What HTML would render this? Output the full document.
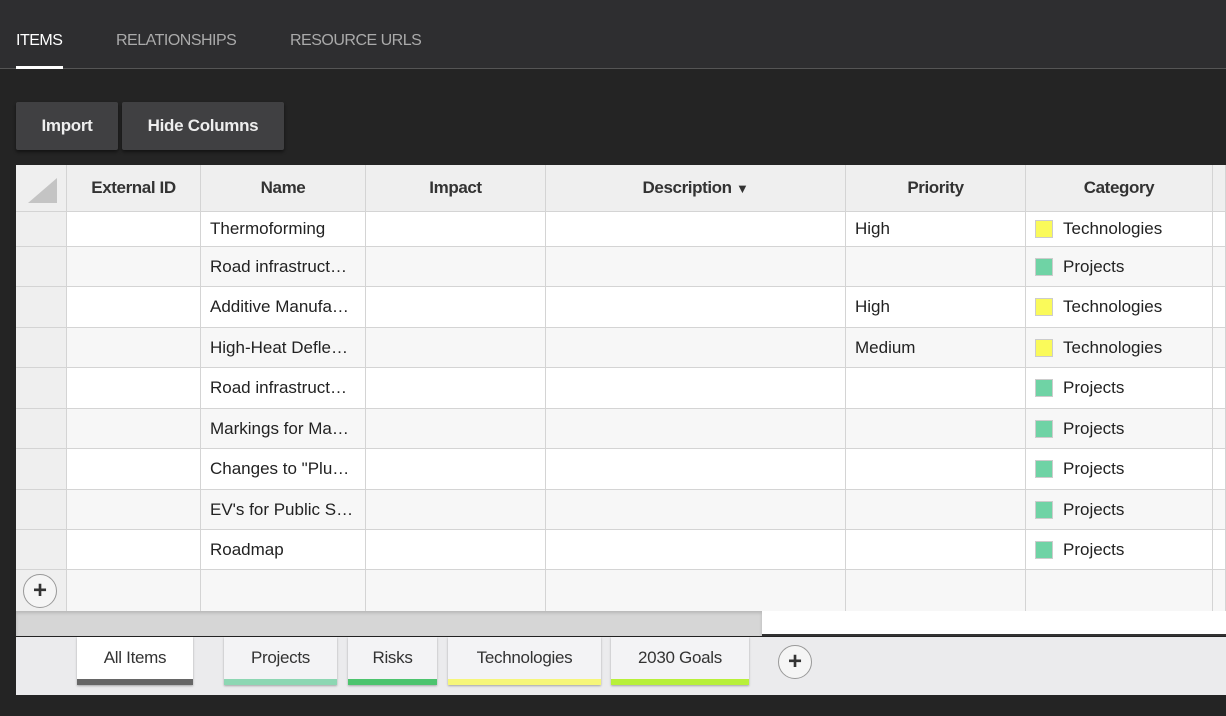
<!DOCTYPE html><html><head><style>
*{margin:0;padding:0;box-sizing:border-box}
body{width:1226px;height:716px;background:#242424;font-family:"Liberation Sans",sans-serif;position:relative;overflow:hidden}
.top{position:absolute;left:0;top:0;width:1226px;height:69px;background:#2e2e30;border-bottom:1px solid #555}
.tab{position:absolute;top:32px;font-size:16px;color:#aaa;letter-spacing:-0.5px}
.btn{position:absolute;top:102px;height:48px;background:#404042;color:#eee;font-weight:bold;font-size:17px;border-radius:2px;display:flex;align-items:center;justify-content:center;letter-spacing:-0.3px;box-shadow:0 2px 3px rgba(0,0,0,.5)}
.grid{position:absolute;left:16px;top:165px;width:1210px}
.r{display:grid;grid-template-columns:51px 134px 165px 180px 300px 180px 187px 13px;border-bottom:1px solid #d4d4d4}
.r>div{border-right:1px solid #d4d4d4;font-size:17px;color:#222;padding:0 0 0 9px;white-space:nowrap;overflow:hidden;display:flex;align-items:center}
.r>div:first-child{background:#efefef}
.h{height:47px;background:#efefef}
.h>div{justify-content:center;padding:0!important;font-size:17px;color:#333;font-weight:bold;letter-spacing:-0.4px}
.w{background:#fff}.g{background:#f7f7f7}
.sw{display:inline-block;width:18px;height:18px;margin-right:10px;border:1px solid #ccc;flex:none}
.y{background:#fafa5a}.gr{background:#6fd3a5}
.sb{position:absolute;left:16px;top:611px;width:1210px;height:25px;background:#fff;border-bottom:2px solid #333}
.sb div{width:746px;height:25px;background:#d6d6d6;box-shadow:inset 0 2px 3px rgba(0,0,0,.15)}
.bar{position:absolute;left:16px;top:637px;width:1210px;height:58px;background:#ebebed}
.st{position:absolute;top:0;height:48px;background:#f3f3f5;font-size:17px;color:#333;text-align:center;padding-top:11px;box-shadow:0 1px 2px rgba(0,0,0,.3);letter-spacing:-0.3px}
.st i{position:absolute;left:0;right:0;bottom:0;height:6px}
.plus{position:absolute;width:34px;height:34px;border-radius:50%;border:1px solid #999;background:#f5f5f5;font-size:24px;font-weight:bold;line-height:31px;text-align:center;color:#333}
</style></head><body>
<div class="top">
<div class="tab" style="left:16px;color:#fff">ITEMS</div>
<div style="position:absolute;left:16px;top:66px;width:47px;height:3px;background:#fff"></div>
<div class="tab" style="left:116px">RELATIONSHIPS</div>
<div class="tab" style="left:290px">RESOURCE URLS</div>
</div>
<div class="btn" style="left:16px;width:102px">Import</div>
<div class="btn" style="left:122px;width:162px">Hide Columns</div>
<div class="grid">
<div class="r h"><div style="position:relative"><span style="position:absolute;left:12px;top:13px;width:0;height:0;border-left:29px solid transparent;border-bottom:25px solid #c4c4c4"></span></div><div>External ID</div><div>Name</div><div>Impact</div><div>Description&nbsp;<span style="font-size:13px">&#9660;</span></div><div>Priority</div><div>Category</div><div></div></div>
<div class="r w" style="height:35px"><div></div><div></div><div>Thermoforming</div><div></div><div></div><div>High</div><div><span class="sw y"></span>Technologies</div><div></div></div>
<div class="r g" style="height:40px"><div></div><div></div><div>Road infrastruct…</div><div></div><div></div><div></div><div><span class="sw gr"></span>Projects</div><div></div></div>
<div class="r w" style="height:41px"><div></div><div></div><div>Additive Manufa…</div><div></div><div></div><div>High</div><div><span class="sw y"></span>Technologies</div><div></div></div>
<div class="r g" style="height:40px"><div></div><div></div><div>High-Heat Defle…</div><div></div><div></div><div>Medium</div><div><span class="sw y"></span>Technologies</div><div></div></div>
<div class="r w" style="height:41px"><div></div><div></div><div>Road infrastruct…</div><div></div><div></div><div></div><div><span class="sw gr"></span>Projects</div><div></div></div>
<div class="r g" style="height:40px"><div></div><div></div><div>Markings for Ma…</div><div></div><div></div><div></div><div><span class="sw gr"></span>Projects</div><div></div></div>
<div class="r w" style="height:41px"><div></div><div></div><div>Changes to "Plu…</div><div></div><div></div><div></div><div><span class="sw gr"></span>Projects</div><div></div></div>
<div class="r g" style="height:40px"><div></div><div></div><div>EV's for Public S…</div><div></div><div></div><div></div><div><span class="sw gr"></span>Projects</div><div></div></div>
<div class="r w" style="height:40px"><div></div><div></div><div>Roadmap</div><div></div><div></div><div></div><div><span class="sw gr"></span>Projects</div><div></div></div>
<div class="r g" style="height:41px;border-bottom:none"><div style="position:relative"><span class="plus" style="left:7px;top:4px">+</span></div><div></div><div></div><div></div><div></div><div></div><div></div><div></div></div>
</div>
<div class="sb"><div></div></div>
<div class="bar">
<div class="st" style="left:61px;width:116px;background:#fff">All Items<i style="background:#666"></i></div>
<div class="st" style="left:208px;width:113px">Projects<i style="background:#8dd7b3"></i></div>
<div class="st" style="left:332px;width:89px">Risks<i style="background:#4dc46e"></i></div>
<div class="st" style="left:432px;width:153px">Technologies<i style="background:#f6f67a"></i></div>
<div class="st" style="left:595px;width:138px">2030 Goals<i style="background:#b8f03a"></i></div>
<span class="plus" style="left:762px;top:8px">+</span>
</div>
</body></html>
